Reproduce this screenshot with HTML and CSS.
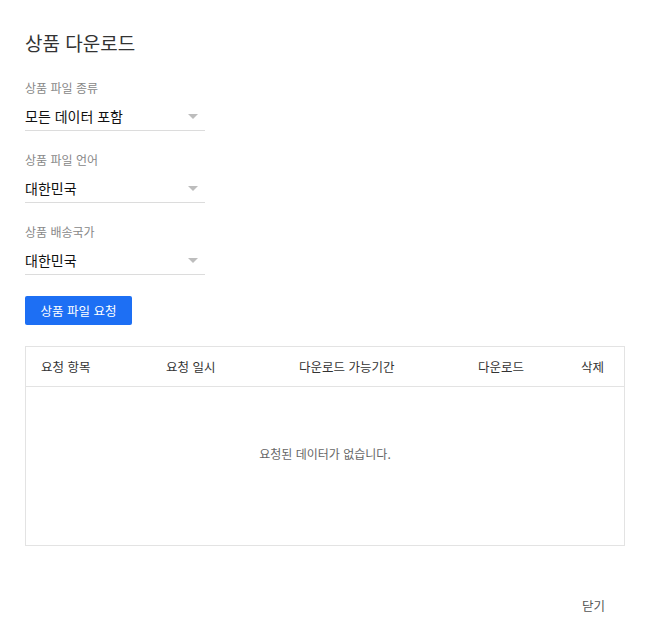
FILE: index.html
```html
<!DOCTYPE html>
<html lang="ko">
<head>
<meta charset="utf-8">
<link rel="stylesheet" href="styles.css">
</head>
<body>
<div class="modal">
  <h1 class="title">상품 다운로드</h1>
  <div class="field">
    <div class="label">상품 파일 종류</div>
    <div class="select"><span>모든 데이터 포함</span><i class="arrow"></i></div>
  </div>
  <div class="field">
    <div class="label">상품 파일 언어</div>
    <div class="select"><span>대한민국</span><i class="arrow"></i></div>
  </div>
  <div class="field">
    <div class="label">상품 배송국가</div>
    <div class="select"><span>대한민국</span><i class="arrow"></i></div>
  </div>
  <button class="btn">상품 파일 요청</button>
  <div class="table">
    <div class="thead">
      <div class="th">요청 항목</div>
      <div class="th">요청 일시</div>
      <div class="th">다운로드 가능기간</div>
      <div class="th">다운로드</div>
      <div class="th">삭제</div>
    </div>
    <div class="empty">요청된 데이터가 없습니다.</div>
  </div>
  <div class="footer"><span class="close">닫기</span></div>
</div>
</body>
</html>
```
FILE: styles.css
```css
html, body {
  margin: 0;
  padding: 0;
  background: #fff;
}
body {
  font-family: "Noto Sans CJK KR", "Noto Sans", sans-serif;
  color: #222;
}
.modal {
  width: 600px;
  padding: 30px 25px 0 25px;
  display: flex;
  flex-direction: column;
}
.title {
  margin: 0 0 23px 0;
  font-size: 19px;
  font-weight: 400;
  line-height: 26px;
  color: #333;
}
.field {
  width: 180px;
  margin-bottom: 20px;
}
.label {
  font-size: 12px;
  line-height: 18px;
  color: #888;
  margin-bottom: 7px;
}
.select {
  display: flex;
  align-items: center;
  justify-content: space-between;
  height: 26px;
  border-bottom: 1px solid #dcdcdc;
  font-size: 14px;
  color: #111;
}
.select span {
  line-height: 20px;
  margin-top: -3px;
}
.arrow {
  width: 0;
  height: 0;
  border-left: 5px solid transparent;
  border-right: 5px solid transparent;
  border-top: 5px solid #bdbdbd;
  margin-right: 7px;
  margin-top: -1px;
}
.btn {
  align-self: flex-start;
  margin: 1px 0 0 0;
  width: 107px;
  height: 29px;
  border: none;
  border-radius: 2px;
  background: #1d6ff4;
  color: #fff;
  font-family: inherit;
  font-size: 12.5px;
  padding: 0;
}
.table {
  margin-top: 21px;
  border: 1px solid #e3e3e3;
}
.thead {
  display: grid;
  grid-template-columns: 125px 133px 179px 103px 1fr;
  height: 39px;
  align-items: center;
  border-bottom: 1px solid #e3e3e3;
}
.th {
  padding-left: 15px;
  font-size: 12.5px;
  color: #333;
}
.empty {
  height: 158px;
  box-sizing: border-box;
  padding-top: 58px;
  text-align: center;
  font-size: 12px;
  color: #666;
}
.footer {
  display: flex;
  justify-content: flex-end;
  padding-top: 50px;
  padding-right: 20px;
}
.close {
  font-size: 12.5px;
  color: #555;
}
```
